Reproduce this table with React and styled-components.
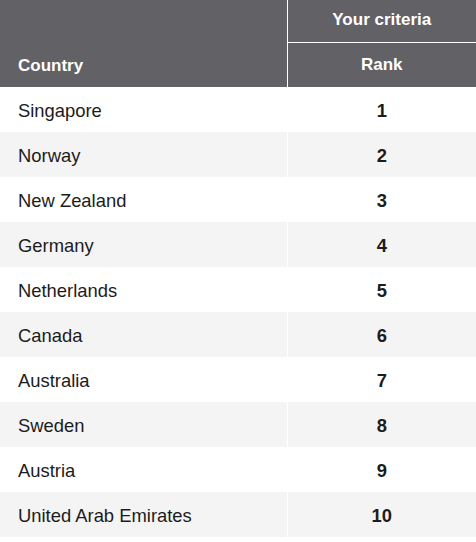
import React from 'react';
import styled, { createGlobalStyle } from 'styled-components';

const GlobalStyle = createGlobalStyle`
  body {
    margin: 0;
    background: #ffffff;
    font-family: "Liberation Sans", Arial, sans-serif;
  }
`;

const Table = styled.table`
  width: 476px;
  border-collapse: collapse;
  table-layout: fixed;
  font-size: 18.4px;
  color: #1c1c1c;
`;

const HeadCell = styled.th`
  background: #616166;
  color: #ffffff;
  font-weight: bold;
  font-size: 17px;
  padding: 0 18px;
  text-align: ${(p) => (p.$left ? 'left' : 'center')};
  vertical-align: ${(p) => (p.$left ? 'bottom' : 'middle')};
  border-left: ${(p) => (p.$left ? 'none' : '1px solid #ffffff')};
  border-bottom: ${(p) => (p.$divider ? '1px solid #ffffff' : 'none')};
  height: ${(p) => p.$h}px;
  padding-bottom: ${(p) => (p.$left ? '11px' : p.$divider ? '1px' : '0')};
  box-sizing: border-box;
`;

const Row = styled.tr`
  background: ${(p) => (p.$shade ? '#f4f4f5' : '#ffffff')};
`;

const Cell = styled.td`
  height: 45px;
  padding: 3px 18px 0;
  box-sizing: border-box;
  text-align: ${(p) => (p.$rank ? 'center' : 'left')};
  font-weight: ${(p) => (p.$rank ? 'bold' : 'normal')};
  border-left: ${(p) => (p.$rank ? '1px solid #ffffff' : 'none')};
`;

const countries = [
  'Singapore',
  'Norway',
  'New Zealand',
  'Germany',
  'Netherlands',
  'Canada',
  'Australia',
  'Sweden',
  'Austria',
  'United Arab Emirates',
];

const App = () => {
  return (
    <>
      <GlobalStyle />
      <Table>
        <colgroup>
          <col style={{ width: '287px' }} />
          <col />
        </colgroup>
        <thead>
          <tr>
            <HeadCell $left rowSpan={2}>Country</HeadCell>
            <HeadCell $divider $h={42}>Your criteria</HeadCell>
          </tr>
          <tr>
            <HeadCell $h={45}>Rank</HeadCell>
          </tr>
        </thead>
        <tbody>
          {countries.map((name, i) => (
            <Row key={name} $shade={i % 2 === 1}>
              <Cell>{name}</Cell>
              <Cell $rank>{i + 1}</Cell>
            </Row>
          ))}
        </tbody>
      </Table>
    </>
  );
};

export default App;
